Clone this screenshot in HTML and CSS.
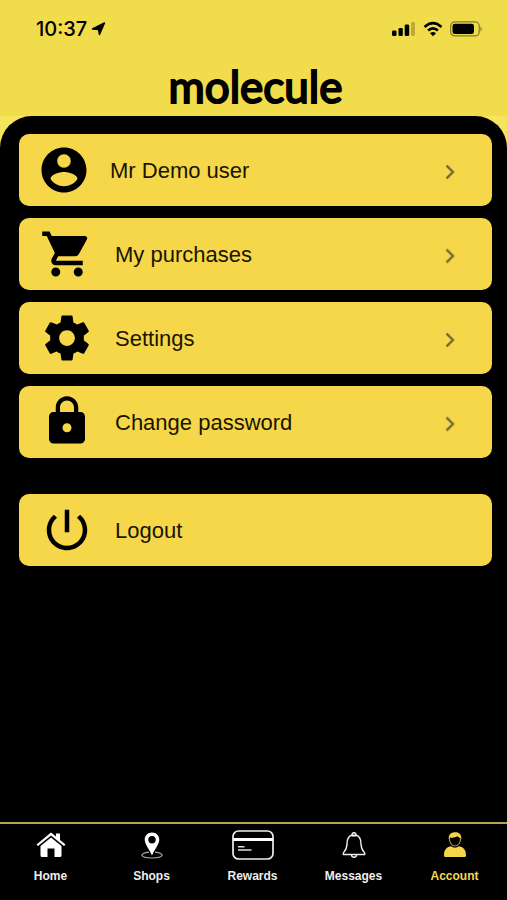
FILE: index.html
```html
<!DOCTYPE html>
<html lang="en">
<head>
<meta charset="utf-8">
<meta name="viewport" content="width=device-width, initial-scale=1">
<title>molecule - Account</title>
<link rel="stylesheet" href="styles.css">
</head>
<body>
<header class="header">
  <div class="statusBar">
    <span class="time">10:37</span>
    <svg class="location" width="15" height="14" viewBox="0 0 15 14"><path d="M13.500 1 L8.500 12.500 L7.500 7.500 L1.500 7 Z" stroke="#000" stroke-width="1.400" stroke-linejoin="round"/></svg>
    <div class="statusIcons">
      <svg width="24" height="16" viewBox="0 0 24 16"><rect x="0" y="9.500" width="4.500" height="5.500" rx="1.300"/><rect x="6.500" y="7" width="4.300" height="8" rx="1.300"/><rect x="12.700" y="3.500" width="4.500" height="11.500" rx="1.300"/><rect x="19" y="1" width="4" height="14" rx="1.300" opacity=".22"/></svg>
      <svg width="20" height="16" viewBox="0 0 20 16"><path d="M1.500 6 Q10 -1.800 18.500 6 M5 9.600 Q10 5.300 15 9.600" fill="none" stroke="#000" stroke-width="2.600"/><path d="M7 12.200 Q10 10 13 12.200 L10 15.200 Z"/></svg>
      <svg width="33" height="16" viewBox="0 0 33 16"><rect x=".7" y=".9" width="28.500" height="14" rx="4" fill="none" stroke="#000" stroke-opacity=".45" stroke-width="1.200"/><rect x="2.500" y="2.700" width="21.500" height="10.400" rx="2.400"/><path d="M30.500 5.500 Q33 8 30.500 10.500 Z" opacity=".5"/></svg>
    </div>
  </div>
  <h1 class="logo">molecule</h1>
</header>

<main class="content">
  <div class="panel">
    <nav class="menu" aria-label="Account">
      <a class="menuItem profile" href="#">
        <svg class="menuIcon" viewBox="0 0 24 24"><path d="M12 2C6.480 2 2 6.480 2 12s4.480 10 10 10 10-4.480 10-10S17.520 2 12 2zm0 3c1.660 0 3 1.340 3 3s-1.340 3-3 3-3-1.340-3-3 1.340-3 3-3zm0 14.200c-2.500 0-4.710-1.280-6-3.220.03-1.990 4-3.080 6-3.080 1.990 0 5.970 1.090 6 3.080-1.290 1.940-3.500 3.220-6 3.220z"/></svg>
        <span class="menuText">Mr Demo user</span>
        <svg class="arrow" viewBox="0 0 10 16"><path d="M1.500 1.500 L8 8 L1.500 14.500"/></svg>
      </a>
      <a class="menuItem" href="#">
        <svg class="menuIcon" viewBox="0 0 24 24"><path d="M7 18c-1.100 0-1.990.9-1.990 2S5.900 22 7 22s2-.9 2-2-.9-2-2-2zM1 2v2h2l3.600 7.590-1.350 2.450c-.16.280-.25.610-.25.960 0 1.100.9 2 2 2h12v-2H7.420c-.14 0-.25-.11-.25-.25l.03-.12.900-1.630h7.450c.75 0 1.410-.41 1.750-1.030l3.580-6.490c.08-.14.120-.31.120-.48 0-.55-.45-1-1-1H5.210l-.94-2H1zm16 16c-1.100 0-1.990.9-1.990 2s.89 2 1.990 2 2-.9 2-2-.9-2-2-2z"/></svg>
        <span class="menuText">My purchases</span>
        <svg class="arrow" viewBox="0 0 10 16"><path d="M1.500 1.500 L8 8 L1.500 14.500"/></svg>
      </a>
      <a class="menuItem" href="#">
        <svg class="menuIcon" viewBox="0 0 24 24"><path d="M19.430 12.980c.04-.32.07-.64.07-.98s-.03-.66-.07-.98l2.110-1.650c.19-.15.240-.42.120-.64l-2-3.460c-.12-.22-.39-.3-.61-.22l-2.490 1c-.52-.4-1.080-.73-1.690-.98l-.38-2.650C14.460 2.180 14.250 2 14 2h-4c-.25 0-.46.180-.49.420l-.38 2.650c-.61.250-1.170.590-1.690.980l-2.490-1c-.23-.09-.49 0-.61.220l-2 3.460c-.13.220-.07.490.120.640l2.110 1.650c-.04.320-.07.650-.07.980s.03.660.070.980l-2.110 1.650c-.19.150-.24.420-.12.640l2 3.460c.12.220.390.300.610.220l2.490-1c.52.400 1.080.730 1.690.980l.38 2.650c.03.240.240.420.490.420h4c.25 0 .46-.18.490-.42l.38-2.650c.61-.25 1.170-.59 1.690-.98l2.490 1c.23.090.490 0 .61-.22l2-3.460c.12-.22.07-.49-.12-.64l-2.110-1.650zM12 15.500c-1.930 0-3.500-1.570-3.500-3.500s1.570-3.500 3.500-3.500 3.500 1.570 3.500 3.500-1.570 3.500-3.500 3.500z"/></svg>
        <span class="menuText">Settings</span>
        <svg class="arrow" viewBox="0 0 10 16"><path d="M1.500 1.500 L8 8 L1.500 14.500"/></svg>
      </a>
      <a class="menuItem" href="#">
        <svg class="menuIcon" viewBox="0 0 24 24"><path d="M18 7.500h-1V5.500c0-2.760-2.240-5-5-5S7 2.740 7 5.500v2H6c-1.100 0-2 .9-2 2v10c0 1.100.9 2 2 2h12c1.100 0 2-.9 2-2v-10c0-1.100-.9-2-2-2zm-6 9c-1.100 0-2-.9-2-2s.9-2 2-2 2 .9 2 2-.9 2-2 2zm3.100-9H8.900V5.500c0-1.710 1.390-3.100 3.100-3.100s3.100 1.390 3.100 3.100v2z"/></svg>
        <span class="menuText">Change password</span>
        <svg class="arrow" viewBox="0 0 10 16"><path d="M1.500 1.500 L8 8 L1.500 14.500"/></svg>
      </a>
    </nav>
    <button type="button" class="menuItem logout">
      <svg class="menuIcon" viewBox="0 0 24 24"><path d="M13 3h-2v10h2V3zm4.830 2.170l-1.420 1.420C17.990 7.860 19 9.810 19 12c0 3.870-3.130 7-7 7s-7-3.130-7-7c0-2.190 1.010-4.140 2.580-5.420L6.170 5.170C4.230 6.820 3 9.260 3 12c0 4.970 4.030 9 9 9s9-4.030 9-9c0-2.740-1.230-5.180-3.170-6.830z"/></svg>
      <span class="menuText">Logout</span>
    </button>
  </div>
</main>

<nav class="tabBar" aria-label="Main">
  <a class="tab" href="#">
    <svg width="30" height="30" viewBox="0 0 30 30"><path d="M.5 14.500 L15 2.500 L20 6.600 V3.500 H24 V9.900 L29.500 14.500 L28 16 L15 5.500 L2 16 Z"/><path d="M4.500 16 L15 7.500 L25.500 16 V25.500 Q25.500 27 24 27 H18.500 V18.500 H11.500 V27 H6 Q4.500 27 4.500 25.500 Z"/></svg>
    <span>Home</span>
  </a>
  <a class="tab" href="#">
    <svg width="30" height="30" viewBox="0 0 30 30"><path d="M12 22.200 C2 23 2 28 15 28 S28 23 18 22.200" fill="none" stroke="#aaa" stroke-width="1.200"/><path fill-rule="evenodd" d="M15 2.500 C10.500 2.500 7.700 5.800 7.700 9.800 C7.700 14 12 19 15 25.500 C18 19 22.300 14 22.300 9.800 C22.300 5.800 19.500 2.500 15 2.500 Z M15 6 A3.700 3.700 0 1 1 15 13.400 A3.700 3.700 0 1 1 15 6 Z"/></svg>
    <span>Shops</span>
  </a>
  <a class="tab" href="#">
    <svg width="42" height="30" viewBox="0 0 42 30"><rect x="1" y="1" width="40" height="28" rx="5.500" fill="none" stroke="#eee" stroke-width="1.700"/><path d="M1 8 H41 V11 H1 Z"/><path d="M6 16.800 H12.500 M6 20 H19.500" stroke="#ddd" stroke-width="1.500"/></svg>
    <span>Rewards</span>
  </a>
  <a class="tab" href="#">
    <svg width="30" height="30" viewBox="0 0 30 30"><path d="M13 5 Q13 2.800 15 2.800 T17 5 C21.500 6.200 22 10 22 14 C22 19 24 21 25.700 23 V24.500 H4.300 V23 C6 21 8 19 8 14 C8 10 8.500 6.200 13 5 Z M12.300 24.500 Q12.500 27.300 15 27.300 T17.700 24.500" fill="none" stroke="#eee" stroke-width="1.400" stroke-linejoin="round"/><path d="M12.500 5.200 Q15 3.800 17.500 5.200 L17.200 6.400 H12.800 Z"/></svg>
    <span>Messages</span>
  </a>
  <a class="tab active" href="#" aria-current="page">
    <svg width="30" height="30" viewBox="0 0 30 30"><path d="M8.800 9.500 C8.300 4.800 11 2.300 15.200 2.300 C19.500 2.300 21.900 5 21.200 9.500 L20 8 Q18.500 7.500 17.800 6.300 Q14 8.200 10.200 7.500 Z"/><path d="M9.400 8 C9.300 12 11.500 16 15 16 S20.700 12 20.600 8" fill="none" stroke="#a18e35" stroke-width="1.200"/><path d="M4 25.500 C4 20 6 17.300 11 16.300 Q15 19.200 19 16.300 C24 17.300 26 20 26 25.500 Q26 27 24.500 27 H5.500 Q4 27 4 25.500 Z"/></svg>
    <span>Account</span>
  </a>
</nav>
</body>
</html>
```

FILE: styles.css
```css
* {
    box-sizing: border-box;
}

body {
    margin: 0;
    min-height: 100vh;
    display: flex;
    flex-direction: column;
    background-color: #000;
    font-family: "Liberation Sans", Arial, sans-serif;
}

svg {
    display: block;
    flex: none;
}

.header {
    background-color: #f1dc4c;
    padding: 16px 24px 8px 36px;
}

.statusBar {
    display: flex;
    align-items: center;
    height: 26px;
}

.time {
    font-family: Inter, sans-serif;
    font-size: 20px;
    font-weight: 500;
    line-height: 26px;
}

.location {
    margin-left: 4px;
}

.statusIcons {
    display: flex;
    gap: 7px;
    margin-left: auto;
}

.logo {
    margin: 22px 0 0;
    padding-right: 8px;
    font-family: Lato, sans-serif;
    font-size: 44px;
    font-weight: 400;
    line-height: 44px;
    text-align: center;
    -webkit-text-stroke: 2px #000;
    stroke-linejoin: round;
}

.content {
    flex: 1;
    display: flex;
    background: linear-gradient(#f5e45c 40px, #000 40px);
}

.panel {
    flex: 1;
    padding: 18px 15px 36px 19px;
    background-color: #000;
    border-radius: 32px 32px 0 0;
}

.menu {
    display: flex;
    flex-direction: column;
    gap: 12px;
}

.menuItem {
    display: flex;
    align-items: center;
    gap: 21px;
    width: 100%;
    height: 72px;
    padding: 0 37px 0 21px;
    border: 0;
    border-radius: 10px;
    background-color: #f5d749;
    color: #1a1400;
    font-family: inherit;
    font-size: 22px;
    text-align: left;
    text-decoration: none;
}

.profile {
    gap: 19px;
    padding-left: 18px;
}

.logout {
    margin-top: 36px;
    cursor: pointer;
}

.menuIcon {
    width: 54px;
    height: 54px;
    fill: #000;
}

.menuText {
    flex: 1;
    padding-top: 2px;
}

.arrow {
    width: 10px;
    height: 20px;
    padding-top: 4px;
    fill: none;
    stroke: #807339;
    stroke-width: 2.5;
}

.tabBar {
    display: flex;
    height: 78px;
    padding: 6px 2px 0 0;
    border-top: 2px solid #b3a359;
}

.tab {
    flex: 1;
    display: flex;
    flex-direction: column;
    align-items: center;
    gap: 9px;
    color: #eee;
    fill: #fff;
    font-size: 12px;
    font-weight: bold;
    line-height: 14px;
    text-decoration: none;
}

.active {
    color: #f3d84c;
    fill: #f8d548;
}
```
